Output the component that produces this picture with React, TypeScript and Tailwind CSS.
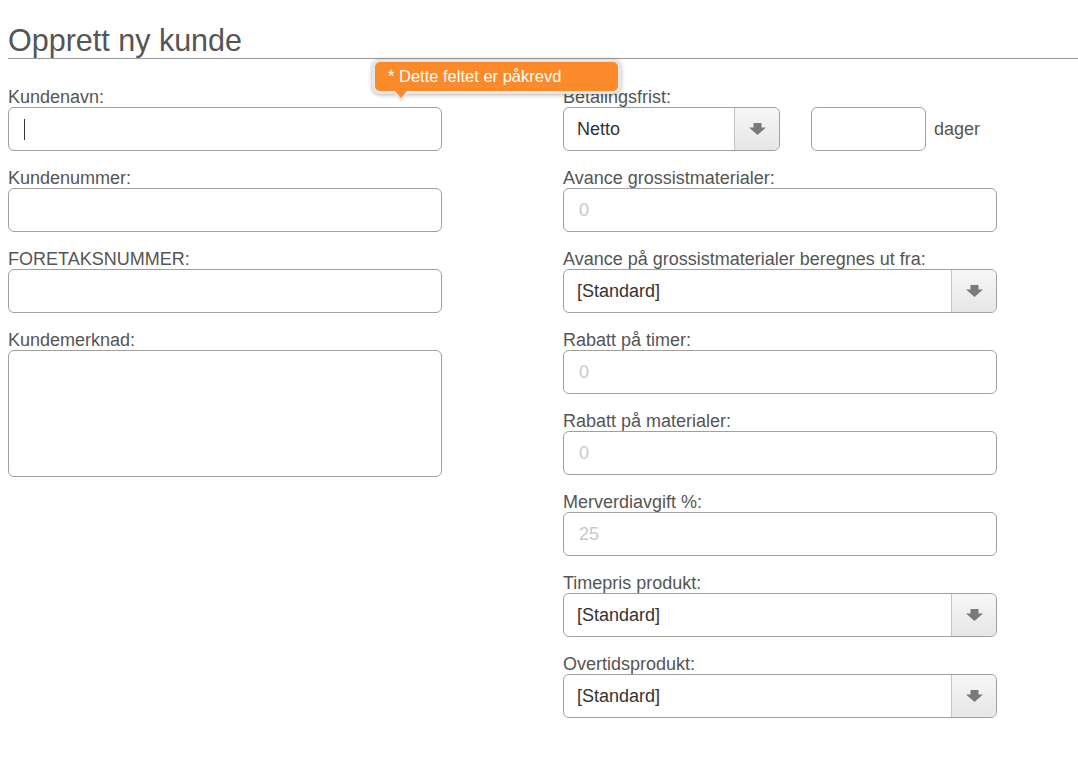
import type { ReactNode } from 'react'

const font = { fontFamily: '"Liberation Sans", Arial, sans-serif' }

function Label({ children }: { children: ReactNode }) {
  return <div className="h-5 whitespace-nowrap leading-5 text-[18px] text-[#555]">{children}</div>
}

function TextBox({ value, muted, caret }: { value?: string; muted?: boolean; caret?: boolean }) {
  return (
    <div className="flex h-11 items-center rounded-md border border-[#a0a0a0] bg-white px-[15px] text-[18px]">
      {caret && <span className="h-[21px] w-px bg-[#333]" />}
      <span className={muted ? 'text-[#c8c8c8]' : 'text-[#333]'}>{value}</span>
    </div>
  )
}

function ArrowIcon() {
  return (
    <svg width="17" height="12" viewBox="0 0 17 12" className="text-[#7a7a7a]">
      <path d="M4.5 0h8v4.5h4.5l-8.5 7.5-8.5-7.5h4.5z" fill="currentColor" />
    </svg>
  )
}

function Select({ value, width }: { value: string; width?: string }) {
  return (
    <div className={`flex h-11 rounded-md border border-[#a0a0a0] bg-white text-[18px] ${width ?? 'w-full'}`}>
      <div className="flex flex-1 items-center px-[13px] text-[#333]">{value}</div>
      <div className="flex w-[45px] items-center justify-center rounded-r-md border-l border-[#c4c4c4] bg-gradient-to-b from-[#f7f7f7] to-[#e6e6e6]">
        <ArrowIcon />
      </div>
    </div>
  )
}

function Field({ label, children }: { label: string; children: ReactNode }) {
  return (
    <div className="mb-[17px]">
      <Label>{label}</Label>
      {children}
    </div>
  )
}

export default function App() {
  return (
    <div className="min-h-[767px] bg-white pl-2" style={font}>
      <h1 className="mt-[22px] border-b border-[#9a9a9a] text-[30.5px] leading-9 text-[#555]">Opprett ny kunde</h1>

      <div className="relative mt-[28px] flex gap-[121px]">
        <div className="w-[434px]">
          <Field label="Kundenavn:">
            <TextBox caret />
          </Field>
          <Field label="Kundenummer:">
            <TextBox />
          </Field>
          <Field label="FORETAKSNUMMER:">
            <TextBox />
          </Field>
          <Field label="Kundemerknad:">
            <div className="h-[127px] rounded-md border border-[#a0a0a0] bg-white" />
          </Field>
        </div>

        <div className="w-[434px]">
          <Field label="Betalingsfrist:">
            <div className="flex items-center">
              <Select value="Netto" width="w-[217px]" />
              <div className="ml-[31px] h-11 w-[115px] rounded-md border border-[#a0a0a0] bg-white" />
              <span className="ml-2 text-[18px] text-[#555]">dager</span>
            </div>
          </Field>
          <Field label="Avance grossistmaterialer:">
            <TextBox value="0" muted />
          </Field>
          <Field label="Avance på grossistmaterialer beregnes ut fra:">
            <Select value="[Standard]" />
          </Field>
          <Field label="Rabatt på timer:">
            <TextBox value="0" muted />
          </Field>
          <Field label="Rabatt på materialer:">
            <TextBox value="0" muted />
          </Field>
          <Field label="Merverdiavgift %:">
            <TextBox value="25" muted />
          </Field>
          <Field label="Timepris produkt:">
            <Select value="[Standard]" />
          </Field>
          <Field label="Overtidsprodukt:">
            <Select value="[Standard]" />
          </Field>
        </div>

        {/* validation tooltip */}
        <div className="absolute left-[364px] top-[-28px]">
          <div className="relative flex h-[35px] w-[249px] items-center rounded-lg border-[3px] border-[#e6e6e6] bg-[#fb8a2a] pl-[13px] text-[16.5px] text-white shadow-[0_1px_4px_rgba(0,0,0,0.3)]">
            <span className="whitespace-nowrap">* Dette feltet er påkrevd</span>
            <div className="absolute left-[17px] top-full h-0 w-0 border-x-[9px] border-t-[11px] border-x-transparent border-t-[#e6e6e6]" />
            <div className="absolute left-[20px] top-full h-0 w-0 border-x-[6px] border-t-[7px] border-x-transparent border-t-[#fb8a2a]" />
          </div>
        </div>
      </div>
    </div>
  )
}
